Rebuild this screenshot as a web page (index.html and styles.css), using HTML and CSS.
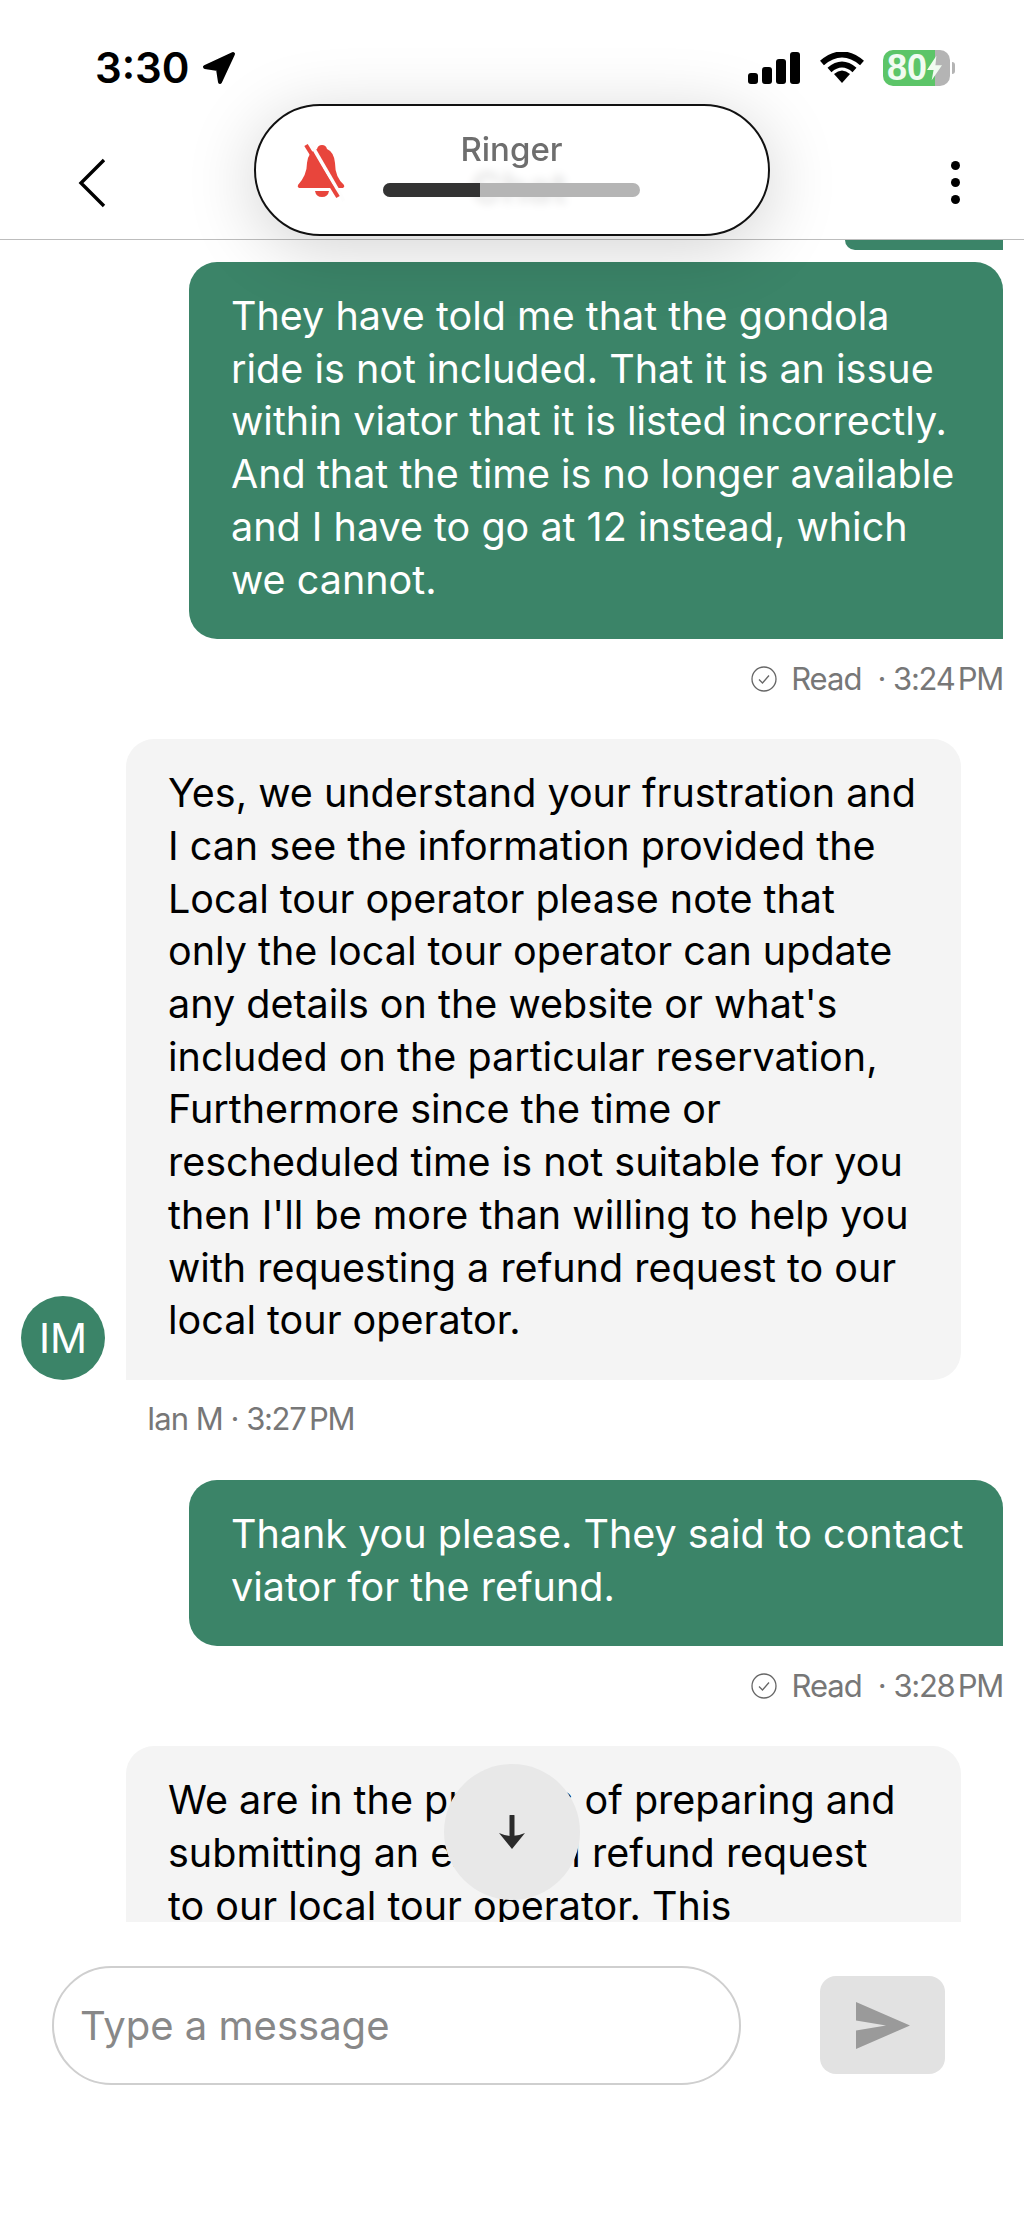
FILE: index.html
```html
<!DOCTYPE html>
<html lang="en">
<head>
  <meta charset="UTF-8" />
  <meta name="viewport" content="width=device-width, initial-scale=1.0"/>
  <title>Chat</title>
  <link rel="stylesheet" href="styles.css">
</head>
<body>
  <div class="phone">
    <div class="status-bar">
      <div class="status-left">
        <span class="clock">3:30</span>
        <svg class="loc-icon" viewBox="0 0 34 34"><path d="M31 3 L3 16 L16 18 L18 31 Z"/></svg>
      </div>
      <div class="status-right">
        <div class="signal">
          <span class="sig-bar sig-1"></span>
          <span class="sig-bar sig-2"></span>
          <span class="sig-bar sig-3"></span>
          <span class="sig-bar sig-4"></span>
        </div>
        <svg class="wifi-icon" viewBox="0 0 44 32">
          <path d="M2 11 Q22 -6 42 11" fill="none" stroke="#000" stroke-width="6"/>
          <path d="M9.5 18 Q22 7 34.5 18" fill="none" stroke="#000" stroke-width="6"/>
          <path d="M14 22 Q22 15 30 22 L22 31 Z"/>
        </svg>
        <div class="battery">
          <div class="battery-body">
            <span class="battery-num">80</span>
            <svg class="bolt" viewBox="0 0 16 26"><path d="M10 0 L0 15 H7 L5 26 L16 10 H9 Z"/></svg>
          </div>
          <span class="battery-tip"></span>
        </div>
      </div>
    </div>

    <header class="chat-header">
      <svg class="back-icon" viewBox="0 0 28 50"><path d="M26 2 L3 25 L26 48" fill="none" stroke="#000" stroke-width="3.4"/></svg>
      <span class="chat-title">Chat</span>
      <div class="kebab"><span></span><span></span><span></span></div>
    </header>

    <div class="messages">
      <div class="prev-tail"></div>

      <div class="bubble sent">They have told me that the gondola<br>ride is not included. That it is an issue<br>within viator that it is listed incorrectly.<br>And that the time is no longer available<br>and I have to go at 12 instead, which<br>we cannot.</div>
      <div class="meta meta-sent">
        <svg class="read-icon" viewBox="0 0 26 26"><circle cx="13" cy="13" r="12" fill="none" stroke="#666" stroke-width="1.3"/><path d="M8 13.5 L11.5 17 L18 9.5" fill="none" stroke="#666" stroke-width="1.3"/></svg>
        <span class="read-label">Read</span>
        <span>· <span class="time">3:24 PM</span></span>
      </div>

      <div class="received-row">
        <div class="avatar">IM</div>
        <div class="bubble received">Yes, we understand your frustration and<br>I can see the information provided the<br>Local tour operator please note that<br>only the local tour operator can update<br>any details on the website or what's<br>included on the particular reservation,<br>Furthermore since the time or<br>rescheduled time is not suitable for you<br>then I'll be more than willing to help you<br>with requesting a refund request to our<br>local tour operator.</div>
      </div>
      <div class="meta meta-received">Ian M · <span class="time">3:27 PM</span></div>

      <div class="bubble sent">Thank you please. They said to contact<br>viator for the refund.</div>
      <div class="meta meta-sent">
        <svg class="read-icon" viewBox="0 0 26 26"><circle cx="13" cy="13" r="12" fill="none" stroke="#666" stroke-width="1.3"/><path d="M8 13.5 L11.5 17 L18 9.5" fill="none" stroke="#666" stroke-width="1.3"/></svg>
        <span class="read-label">Read</span>
        <span>· <span class="time">3:28 PM</span></span>
      </div>

      <div class="received-row">
        <div class="avatar-space"></div>
        <div class="bubble received">We are in the process of preparing and<br>submitting an external refund request<br>to our local tour operator. This</div>
      </div>
    </div>

    <div class="composer">
      <div class="message-input">Type a message</div>
      <div class="send-btn">
        <svg viewBox="0 0 54 47"><path d="M0 0 L54 23.5 L0 47 V28.5 L30 23.5 L0 18.5 Z"/></svg>
      </div>
    </div>

    <!-- overlays -->
    <div class="ringer">
      <svg class="bell" viewBox="0 0 48 58">
        <path d="M25 0 Q29 0 30 4 Q37 7 38 18 Q38 32 47 40 Q48 42 46 43 H2 Q0 42 1 40 Q10 30 10 18 Q11 7 20 4 Q21 0 25 0 Z"/>
        <path d="M18 46 H32 Q31 52 25 52 Q19 52 18 46 Z"/>
        <path class="bell-gap" d="M14 -1 L47 56"/>
        <path class="bell-slash" d="M9 0 L41 52"/>
      </svg>
      <div class="ringer-main">
        <span class="ringer-label">Ringer</span>
        <div class="ringer-track"><div class="ringer-fill"></div></div>
      </div>
    </div>

    <div class="scroll-down">
      <svg viewBox="0 0 26 34"><path d="M13 1 V24" stroke="#2b2b2b" stroke-width="5" stroke-linecap="round"/><path d="M0 18 L13 34 L26 18 Q13 24 0 18 Z" fill="#2b2b2b"/></svg>
    </div>
  </div>
</body>
</html>
```

FILE: styles.css
```css
* {
  box-sizing: border-box;
}

body {
  margin: 0;
  background: #ffffff;
  font-family: Inter, "Liberation Sans", sans-serif;
}

.phone {
  position: relative;
  width: 1024px;
  height: 2216px;
  display: flex;
  flex-direction: column;
  overflow: hidden;
  background: #ffffff;
}

/* status bar */
.status-bar {
  height: 126px;
  padding: 50px 69px 0 95px;
  display: flex;
  justify-content: space-between;
  align-items: flex-start;
}

.status-left {
  display: flex;
  align-items: center;
  gap: 12px;
}

.clock {
  font-size: 42px;
  line-height: 36px;
  font-weight: 600;
  color: #000;
}

.loc-icon {
  width: 34px;
  height: 34px;
  stroke: #000;
  stroke-width: 4;
  stroke-linejoin: round;
}

.status-right {
  display: flex;
  align-items: center;
  gap: 20px;
}

.signal {
  display: flex;
  align-items: flex-end;
  gap: 4px;
  height: 32px;
}

.sig-bar {
  width: 10px;
  background: #000;
  border-radius: 3px;
}

.sig-1 { height: 11px; }
.sig-2 { height: 17px; }
.sig-3 { height: 25px; }
.sig-4 { height: 32px; }

.wifi-icon {
  width: 44px;
  height: 32px;
}

.battery {
  display: flex;
  align-items: center;
  gap: 2px;
  margin-left: -1px;
}

.battery-body {
  width: 67px;
  height: 36px;
  border-radius: 10px;
  background: linear-gradient(to right, #5cc568 78%, #b4b4b4 78%);
  display: flex;
  align-items: center;
  padding-left: 4px;
}

.battery-num {
  font-family: "Liberation Sans", sans-serif;
  font-size: 36px;
  font-weight: 700;
  color: #f1fbf1;
}

.bolt {
  width: 15px;
  height: 26px;
  fill: #f1fbf1;
}

.battery-tip {
  width: 3px;
  height: 12px;
  background: #b4b4b4;
  border-radius: 0 3px 3px 0;
}

/* header */
.chat-header {
  height: 114px;
  flex-shrink: 0;
  border-bottom: 1px solid #bdbdbd;
  padding: 0 64px 0 78px;
  display: grid;
  grid-template-columns: 1fr auto 1fr;
  align-items: center;
}

.back-icon {
  width: 28px;
  height: 50px;
}

.chat-title {
  font-size: 42px;
  font-weight: 600;
  color: #111;
  margin-top: 10px;
}

.kebab {
  justify-self: end;
  display: flex;
  flex-direction: column;
  gap: 8px;
}

.kebab span {
  width: 9px;
  height: 9px;
  border-radius: 50%;
  background: #000;
}

/* messages */
.messages {
  height: 1682px;
  flex-shrink: 0;
  overflow: hidden;
  padding: 0 21px;
  display: flex;
  flex-direction: column;
  align-items: stretch;
}

.prev-tail {
  align-self: flex-end;
  width: 158px;
  height: 10px;
  flex-shrink: 0;
  background: #3b8468;
  border-bottom-left-radius: 20px;
  margin-bottom: 12px;
}

.bubble {
  font-size: 39.5px;
  line-height: 52.7px;
  padding: 28px 30px 33px;
  border-radius: 28px;
  white-space: nowrap;
  flex-shrink: 0;
}

.sent {
  align-self: flex-end;
  width: 814px;
  background: #3b8468;
  color: #ffffff;
  padding-left: 42px;
  border-bottom-right-radius: 0;
}

.received-row {
  display: flex;
  align-items: flex-end;
  gap: 21px;
  flex-shrink: 0;
}

.received {
  width: 835px;
  background: #f4f4f4;
  color: #000;
  padding-left: 42px;
  border-bottom-left-radius: 0;
}

.avatar,
.avatar-space {
  width: 84px;
  height: 84px;
  flex-shrink: 0;
}

.avatar {
  border-radius: 50%;
  background: #3b8468;
  color: #fff;
  font-size: 41px;
  display: flex;
  align-items: center;
  justify-content: center;
}

.meta {
  font-size: 31px;
  line-height: 40px;
  color: #777;
  letter-spacing: -1px;
  flex-shrink: 0;
}

.time {
  letter-spacing: -1.3px;
  word-spacing: -4px;
}

.meta-sent {
  display: flex;
  justify-content: flex-end;
  align-items: center;
  margin: 20px 0 40px;
}

.read-icon {
  width: 26px;
  height: 26px;
  margin-right: 14px;
}

.read-label {
  margin-right: 16px;
}

.meta-received {
  margin: 19px 0 41px 126px;
}

/* composer */
.composer {
  flex: 1;
  padding: 44px 79px 0 52px;
  display: flex;
  justify-content: space-between;
  align-items: flex-start;
  background: #ffffff;
}

.message-input {
  width: 689px;
  height: 119px;
  border: 2.5px solid #cfcfcf;
  border-radius: 60px;
  padding-left: 26px;
  display: flex;
  align-items: center;
  font-size: 40px;
  color: #888;
}

.send-btn {
  width: 125px;
  height: 98px;
  margin-top: 10px;
  border-radius: 16px;
  background: #e2e2e2;
  display: flex;
  align-items: center;
  justify-content: center;
}

.send-btn svg {
  width: 54px;
  height: 47px;
  fill: #9a9a9a;
}

/* ringer banner sits on top of the header */
.ringer {
  position: absolute;
  left: 254px;
  top: 104px;
  width: 516px;
  height: 132px;
  border: 2px solid #111;
  border-radius: 66px;
  background: rgba(255, 255, 255, 0.88);
  backdrop-filter: blur(5px);
  box-shadow: 0 12px 70px rgba(0, 0, 0, 0.18);
  display: flex;
  align-items: flex-start;
  padding: 39px 0 0 41px;
}

.bell {
  width: 48px;
  height: 58px;
  fill: #e8453c;
  overflow: visible;
}

.bell-gap {
  fill: none;
  stroke: #fdfdfd;
  stroke-width: 3.5;
}

.bell-slash {
  fill: none;
  stroke: #e8453c;
  stroke-width: 4;
}

.ringer-main {
  margin-left: 38px;
  width: 257px;
  display: flex;
  flex-direction: column;
  align-items: center;
  margin-top: -16px;
}

.ringer-label {
  font-size: 33px;
  line-height: 40px;
  font-weight: 500;
  color: #6e6e6e;
}

.ringer-track {
  width: 257px;
  height: 14px;
  margin-top: 14px;
  border-radius: 7px;
  background: #b5b5b5;
  overflow: hidden;
}

.ringer-fill {
  width: 97px;
  height: 14px;
  background: #333;
}

/* scroll to bottom */
.scroll-down {
  position: absolute;
  left: 444px;
  top: 1764px;
  width: 136px;
  height: 136px;
  border-radius: 50%;
  background: #e8e8e8;
  display: flex;
  align-items: center;
  justify-content: center;
}

.scroll-down svg {
  width: 26px;
  height: 34px;
}
```
